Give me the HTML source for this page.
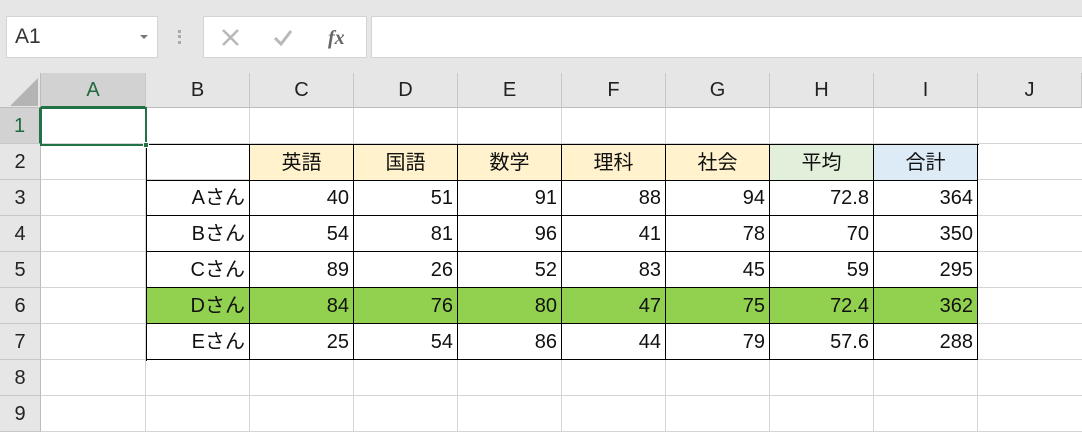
<!DOCTYPE html><html><head><meta charset="utf-8"><style>
*{margin:0;padding:0;box-sizing:border-box}
body{width:1082px;height:432px;overflow:hidden;background:#fff;font-family:"Liberation Sans","Noto Sans CJK JP",sans-serif;position:relative}
.a{position:absolute}
.top{left:0;top:0;width:1082px;height:73px;background:#e6e6e6}
.box{background:#fff;border:1px solid #d4d4d4}
.ch{top:73px;height:35px;background:#e6e6e6;border-right:1px solid #c8c8c8;border-bottom:1px solid #bdbdbd;font-size:20px;color:#222;text-align:center;line-height:35px}
.rh{left:0;width:41px;height:36px;background:#e6e6e6;border-bottom:1px solid #c8c8c8;border-right:1px solid #bdbdbd;font-size:20px;color:#222;text-align:center;line-height:36px}
.g{border-right:1px solid #d4d4d4;border-bottom:1px solid #d4d4d4}
.c{height:36px;font-size:20px;line-height:36px;color:#111;border-right:1px solid #000;border-bottom:1px solid #000;padding:0 4px;text-align:right}
.h{text-align:center}
</style></head><body>
<div class="a top"></div>
<div class="a box" style="left:6px;top:16px;width:152px;height:42px;font-size:21px;line-height:40px;padding-left:8px;color:#333">A1</div>
<div class="a" style="left:140px;top:35px;border:4px solid transparent;border-top:4px solid #777"></div>
<div class="a" style="left:178px;top:30px;width:3px;height:14px;border-left:3px dotted #aaa"></div>
<div class="a box" style="left:203px;top:16px;width:164px;height:42px"></div>
<svg class="a" style="left:220px;top:27px" width="130" height="22"><path d="M3 3L18 18M18 3L3 18" stroke="#b8b8b8" stroke-width="2.5"/><path d="M55 11l6 6 10-13" stroke="#b8b8b8" stroke-width="3" fill="none"/><text x="108" y="17" font-family="Liberation Serif" font-style="italic" font-weight="bold" font-size="20" fill="#666">fx</text></svg>
<div class="a box" style="left:371px;top:16px;width:720px;height:42px"></div>
<div class="a" style="left:0;top:73px;width:41px;height:35px;background:#e6e6e6;border-right:1px solid #bdbdbd;border-bottom:1px solid #bdbdbd"></div>
<svg class="a" style="left:10px;top:78px" width="30" height="28"><path d="M28 0V28H0Z" fill="#b4b4b4"/></svg>
<div class="a ch" style="left:41px;width:105px;background:#d2d2d2;color:#1e6b3f;border-bottom:2px solid #217346">A</div>
<div class="a ch" style="left:146px;width:104px">B</div>
<div class="a ch" style="left:250px;width:104px">C</div>
<div class="a ch" style="left:354px;width:104px">D</div>
<div class="a ch" style="left:458px;width:104px">E</div>
<div class="a ch" style="left:562px;width:104px">F</div>
<div class="a ch" style="left:666px;width:104px">G</div>
<div class="a ch" style="left:770px;width:104px">H</div>
<div class="a ch" style="left:874px;width:104px">I</div>
<div class="a ch" style="left:978px;width:104px">J</div>
<div class="a rh" style="top:108px;background:#d2d2d2;color:#1e6b3f;border-right:2px solid #217346">1</div>
<div class="a rh" style="top:144px">2</div>
<div class="a rh" style="top:180px">3</div>
<div class="a rh" style="top:216px">4</div>
<div class="a rh" style="top:252px">5</div>
<div class="a rh" style="top:288px">6</div>
<div class="a rh" style="top:324px">7</div>
<div class="a rh" style="top:360px">8</div>
<div class="a rh" style="top:396px">9</div>
<div class="a" style="left:41px;top:108px;width:1041px;height:324px;background:
repeating-linear-gradient(to bottom,transparent 0 35px,#d4d4d4 35px 36px),
linear-gradient(to right,transparent 104px,#d4d4d4 104px 105px,transparent 105px 208px,#d4d4d4 208px 209px,transparent 209px 312px,#d4d4d4 312px 313px,transparent 313px 416px,#d4d4d4 416px 417px,transparent 417px 520px,#d4d4d4 520px 521px,transparent 521px 624px,#d4d4d4 624px 625px,transparent 625px 728px,#d4d4d4 728px 729px,transparent 729px 832px,#d4d4d4 832px 833px,transparent 833px 936px,#d4d4d4 936px 937px,transparent 937px)"></div>
<div class="a" style="left:146px;top:144px;width:833px;height:217px;border-top:1px solid #000;border-left:1px solid #000;display:grid;grid-template-columns:103px repeat(7,104px);grid-template-rows:35px repeat(5,36px)">
<div class="c"></div><div class="c h" style="background:#fff2cc">英語</div><div class="c h" style="background:#fff2cc">国語</div><div class="c h" style="background:#fff2cc">数学</div><div class="c h" style="background:#fff2cc">理科</div><div class="c h" style="background:#fff2cc">社会</div><div class="c h" style="background:#e2efda">平均</div><div class="c h" style="background:#ddebf7">合計</div>
<div class="c">Aさん</div><div class="c">40</div><div class="c">51</div><div class="c">91</div><div class="c">88</div><div class="c">94</div><div class="c">72.8</div><div class="c">364</div>
<div class="c">Bさん</div><div class="c">54</div><div class="c">81</div><div class="c">96</div><div class="c">41</div><div class="c">78</div><div class="c">70</div><div class="c">350</div>
<div class="c">Cさん</div><div class="c">89</div><div class="c">26</div><div class="c">52</div><div class="c">83</div><div class="c">45</div><div class="c">59</div><div class="c">295</div>
<div class="c" style="background:#92d050">Dさん</div><div class="c" style="background:#92d050">84</div><div class="c" style="background:#92d050">76</div><div class="c" style="background:#92d050">80</div><div class="c" style="background:#92d050">47</div><div class="c" style="background:#92d050">75</div><div class="c" style="background:#92d050">72.4</div><div class="c" style="background:#92d050">362</div>
<div class="c">Eさん</div><div class="c">25</div><div class="c">54</div><div class="c">86</div><div class="c">44</div><div class="c">79</div><div class="c">57.6</div><div class="c">288</div>
</div>
<div class="a" style="left:40px;top:107px;width:107px;height:39px;border:2px solid #217346"></div>
<div class="a" style="left:143px;top:142px;width:6px;height:6px;background:#217346;border:1px solid #fff"></div>
</body></html>
